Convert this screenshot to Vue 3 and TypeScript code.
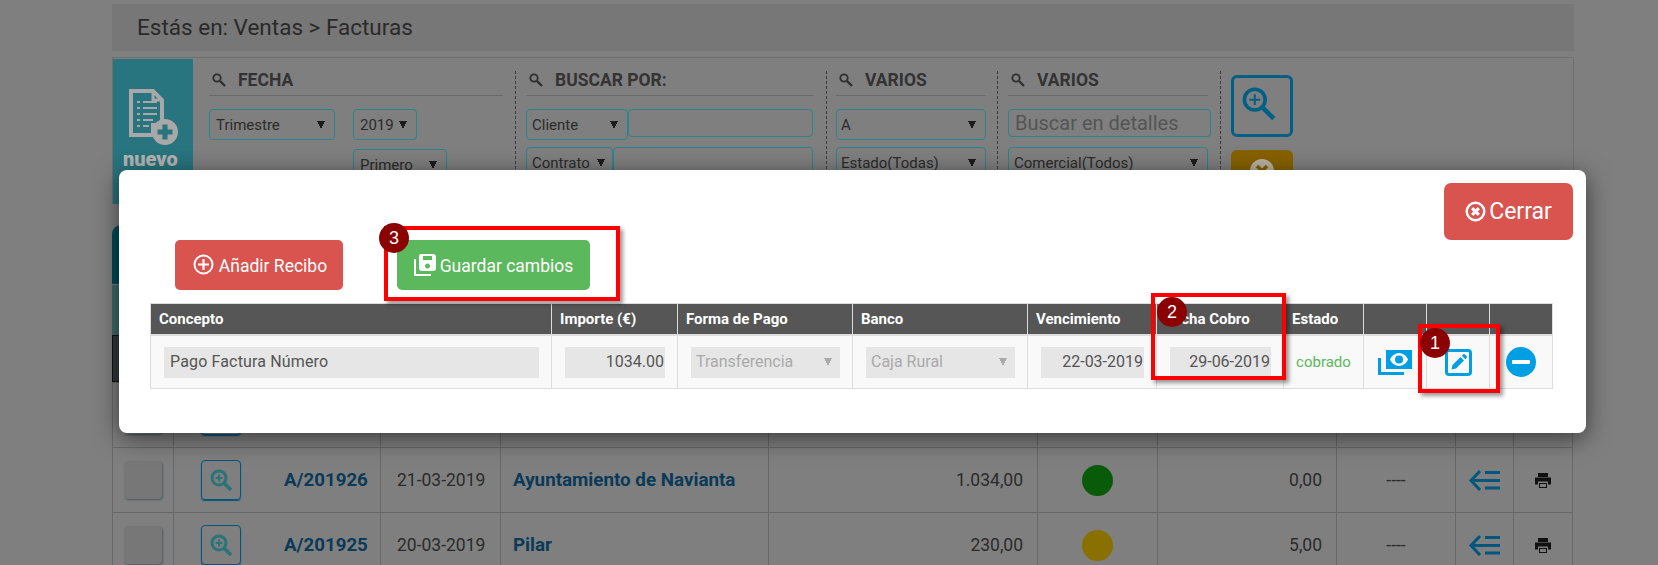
<script setup lang="ts">
interface Row {
  num: string
  date: string
  name: string
  amount: string
  dot: string
  paid: string
  other: string
}

const rows: Row[] = [
  { num: '', date: '', name: '', amount: '', dot: '', paid: '', other: '' },
  { num: 'A/201926', date: '21-03-2019', name: 'Ayuntamiento de Navianta', amount: '1.034,00', dot: 'green', paid: '0,00', other: '----' },
  { num: 'A/201925', date: '20-03-2019', name: 'Pilar', amount: '230,00', dot: 'yellow', paid: '5,00', other: '----' }
]
</script>

<template>
  <div class="page">
    <div class="crumb">Estás en: Ventas &gt; Facturas</div>

    <section class="panel">
      <div class="nuevo">
        <svg class="nuevo-icon" viewBox="0 0 50 57" width="50" height="57">
          <path d="M2 2H24L33 11V36H24V46H2Z" fill="none" stroke="#a8a8a8" stroke-width="4" />
          <path d="M24 2V11H33" fill="none" stroke="#a8a8a8" stroke-width="3" />
          <path d="M8 13h3M14 13h14M8 19h3M14 19h14M8 25h3M14 25h14M8 31h3M14 31h10M8 37h3M14 37h6" stroke="#a8a8a8" stroke-width="2" />
          <circle cx="36" cy="43" r="13" fill="#a8a8a8" />
          <path d="M36 35.500V50.500M28.500 43H43.500" stroke="#28747f" stroke-width="5" />
        </svg>
        <span class="nuevo-label">nuevo</span>
      </div>

      <div class="group g1">
        <h3 class="group-head">
          <svg class="lens" viewBox="0 0 14 14" width="14" height="14"><circle cx="5" cy="5" r="3.700" fill="none" stroke="#2f2f2f" stroke-width="1.800" /><path d="M8 8l5 5" stroke="#2f2f2f" stroke-width="2.400" /></svg>
          FECHA
        </h3>
        <div class="fecha-row">
          <select class="sel w126"><option>Trimestre</option></select>
          <div class="stack">
            <select class="sel w64"><option>2019</option></select>
            <select class="sel w94"><option>Primero</option></select>
          </div>
        </div>
      </div>

      <div class="group g2">
        <h3 class="group-head">
          <svg class="lens" viewBox="0 0 14 14" width="14" height="14"><circle cx="5" cy="5" r="3.700" fill="none" stroke="#2f2f2f" stroke-width="1.800" /><path d="M8 8l5 5" stroke="#2f2f2f" stroke-width="2.400" /></svg>
          BUSCAR POR:
        </h3>
        <div class="pair"><select class="sel w102"><option>Cliente</option></select><input class="txt grow" /></div>
        <div class="pair second"><select class="sel w87"><option>Contrato</option></select><input class="txt grow" /></div>
      </div>

      <div class="group g3">
        <h3 class="group-head">
          <svg class="lens" viewBox="0 0 14 14" width="14" height="14"><circle cx="5" cy="5" r="3.700" fill="none" stroke="#2f2f2f" stroke-width="1.800" /><path d="M8 8l5 5" stroke="#2f2f2f" stroke-width="2.400" /></svg>
          VARIOS
        </h3>
        <select class="sel full"><option>A</option></select>
        <select class="sel full second"><option>Estado(Todas)</option></select>
      </div>

      <div class="group g4">
        <h3 class="group-head">
          <svg class="lens" viewBox="0 0 14 14" width="14" height="14"><circle cx="5" cy="5" r="3.700" fill="none" stroke="#2f2f2f" stroke-width="1.800" /><path d="M8 8l5 5" stroke="#2f2f2f" stroke-width="2.400" /></svg>
          VARIOS
        </h3>
        <input class="txt detalles" placeholder="Buscar en detalles" />
        <select class="sel full third"><option>Comercial(Todos)</option></select>
      </div>

      <div class="actions">
        <button class="search-btn">
          <svg viewBox="0 0 62 62" width="56" height="56">
            <circle cx="23" cy="24" r="11.500" fill="none" stroke="#005f85" stroke-width="4" />
            <path d="M32 33L44 45" stroke="#005f85" stroke-width="5" />
            <path d="M23 18V30M17 24H29" stroke="#005f85" stroke-width="2.200" />
          </svg>
        </button>
        <button class="clear-btn">
          <svg viewBox="0 0 24 24" width="24" height="24">
            <circle cx="12" cy="12" r="12" fill="#b9b2a2" />
            <path d="M7 7L17 17M17 7L7 17" stroke="#876200" stroke-width="3.500" />
          </svg>
        </button>
      </div>
    </section>

    <div class="tab"></div>
    <div class="subbar"></div>
    <div class="list-head"></div>

    <table class="list">
      <colgroup>
        <col class="c61" /><col class="c207" /><col class="c120" /><col class="c268" /><col class="c269" />
        <col class="c120" /><col class="c179" /><col class="c119" /><col class="c58" /><col class="c59" />
      </colgroup>
      <tbody>
        <tr v-for="(row, i) in rows" :key="i">
          <td><span class="check"></span></td>
          <td>
            <div class="num-cell">
              <button class="zoom-btn">
                <svg viewBox="0 0 22 22" width="22" height="22">
                  <circle cx="9" cy="9" r="7" fill="none" stroke="#2a7378" stroke-width="3" />
                  <path d="M14 14L21 21" stroke="#2a7378" stroke-width="3.500" />
                  <path d="M9 5.500V12.500M5.500 9H12.500" stroke="#2a7378" stroke-width="1.800" />
                </svg>
              </button>
              <b class="num">{{ row.num }}</b>
            </div>
          </td>
          <td class="date">{{ row.date }}</td>
          <td class="name">{{ row.name }}</td>
          <td class="amount">{{ row.amount }}</td>
          <td class="center"><span v-if="row.dot" class="dot" :class="row.dot"></span></td>
          <td class="amount">{{ row.paid }}</td>
          <td class="center other">{{ row.other }}</td>
          <td class="center">
            <svg v-if="row.dot" class="cell-icon" viewBox="0 0 32 22" width="32" height="22">
              <path d="M11 2L2 11.500L11 21" fill="none" stroke="#00567c" stroke-width="3" />
              <path d="M3 11.500H31M16 3.500H31M16 19H31" stroke="#00567c" stroke-width="3" />
            </svg>
          </td>
          <td class="center">
            <svg class="cell-icon" viewBox="0 0 16 15" width="16" height="15">
              <path d="M3 0H13V4H3ZM0 4.500H16V11.500H13V8.500H3V11.500H0ZM4 10H12V15H4Z" fill="#111" />
              <path d="M5 11H11V14H5Z" fill="#7f7f7f" />
            </svg>
          </td>
        </tr>
      </tbody>
    </table>

    <div class="modal">
      <div class="modal-top">
        <button class="btn cerrar">
          <svg viewBox="0 0 22 22" width="21" height="21">
            <circle cx="11" cy="11" r="9.200" fill="none" stroke="#fff" stroke-width="2.600" />
            <path d="M7.500 7.500L14.500 14.500M14.500 7.500L7.500 14.500" stroke="#fff" stroke-width="3.400" />
          </svg>
          Cerrar
        </button>
      </div>
      <div class="modal-actions">
        <button class="btn add">
          <svg viewBox="0 0 21 21" width="21" height="21">
            <circle cx="10.500" cy="10.500" r="9" fill="none" stroke="#fff" stroke-width="2" />
            <path d="M10.500 5V16M5 10.500H16" stroke="#fff" stroke-width="2.200" />
          </svg>
          Añadir Recibo
        </button>
        <button class="btn save">
          <svg viewBox="0 0 22 22" width="22" height="22">
            <path fill-rule="evenodd" d="M7 0H19Q22 0 22 3V14Q22 17 19 17H8Q5 17 5 14V2Q5 0 7 0ZM9 2V6H18V2ZM13.500 9.500a2.500 2.500 0 1 0 .01 0Z" fill="#fff" />
            <path d="M1 5V21H17" fill="none" stroke="#fff" stroke-width="2" />
          </svg>
          Guardar cambios
        </button>
      </div>

      <table class="receipts">
        <colgroup>
          <col class="m401" /><col class="m126" /><col class="m175" /><col class="m175" /><col class="m129" />
          <col class="m127" /><col class="m80" /><col class="m63" /><col class="m63" /><col class="m63" />
        </colgroup>
        <thead>
          <tr>
            <th>Concepto</th><th>Importe (€)</th><th>Forma de Pago</th><th>Banco</th><th>Vencimiento</th>
            <th>Fecha Cobro</th><th>Estado</th><th></th><th></th><th></th>
          </tr>
        </thead>
        <tbody>
          <tr>
            <td><input class="field" value="Pago Factura Número" disabled /></td>
            <td><input class="field right" value="1034.00" disabled /></td>
            <td><select class="field pick" disabled><option>Transferencia</option></select></td>
            <td><select class="field pick" disabled><option>Caja Rural</option></select></td>
            <td><input class="field right" value="22-03-2019" disabled /></td>
            <td><input class="field right" value="29-06-2019" disabled /></td>
            <td class="cobrado">cobrado</td>
            <td class="tool">
              <svg viewBox="0 0 34 25" width="34" height="25">
                <path fill-rule="evenodd" d="M8 0H34V19H8ZM21 3C16 3 13 7 12 9.500C13 12 16 16 21 16C26 16 29 12 30 9.500C29 7 26 3 21 3Z" fill="#009fe3" />
                <circle cx="21" cy="9.500" r="4" fill="#009fe3" />
                <path d="M1.500 8V23.500H26" fill="none" stroke="#009fe3" stroke-width="3" />
              </svg>
            </td>
            <td class="tool">
              <svg viewBox="0 0 27 27" width="27" height="27">
                <path d="M15 1.500H4Q1.500 1.500 1.500 4V23Q1.500 25.500 4 25.500H23Q25.500 25.500 25.500 23V12" fill="none" stroke="#009fe3" stroke-width="3" />
                <path d="M15 1.500H23Q25.500 1.500 25.500 4V12" fill="none" stroke="#009fe3" stroke-width="3" />
                <path d="M6.500 20.500L7.500 16L15.500 8L19 11.500L11 19.500ZM16.800 6.700L18 5.500Q19 4.500 20 5.500L21.500 7Q22.500 8 21.500 9L20.300 10.200Z" fill="#009fe3" />
              </svg>
            </td>
            <td class="tool">
              <svg viewBox="0 0 30 30" width="30" height="30">
                <circle cx="15" cy="15" r="15" fill="#009fe3" />
                <rect x="6" y="13" width="18" height="4" rx="1" fill="#fff" />
              </svg>
            </td>
          </tr>
        </tbody>
      </table>
    </div>

    <div class="mark m3"></div>
    <div class="mark m2"></div>
    <div class="mark m1"></div>
    <span class="badge b3">3</span>
    <span class="badge b2">2</span>
    <span class="badge b1">1</span>
  </div>
</template>

<style>
html,
body {
  margin: 0;
  overflow: hidden;
  background: #7f7f7f;
}
</style>

<style scoped>
.page {
  position: relative;
  box-sizing: border-box;
  width: 1658px;
  height: 565px;
  padding: 4px 84px 0 112px;
  overflow: hidden;
  background: #7f7f7f;
  font-family: Roboto, "Liberation Sans", sans-serif;
  color: #2b2b2b;
}
.crumb {
  box-sizing: border-box;
  height: 47px;
  padding-left: 25px;
  line-height: 46px;
  font-size: 22.500px;
  background: #777;
  color: #2a2a2a;
}
.panel {
  display: flex;
  box-sizing: border-box;
  height: 147px;
  margin-top: 6px;
  padding: 1px 0 0;
  border: 1px solid #6f6f6f;
  border-bottom: 0;
}
.nuevo {
  display: flex;
  flex-direction: column;
  align-items: flex-start;
  width: 80px;
  flex: none;
  padding: 30px 0 0 16px;
  box-sizing: border-box;
  background: #28747f;
}
.nuevo-label {
  margin: 2px 0 0 -6px;
  font-size: 20px;
  font-weight: 900;
  line-height: 22px;
  color: #b4b4b4;
}
.group {
  box-sizing: border-box;
  flex: none;
  height: 133px;
  margin-top: 12px;
  border-right: 1px dashed #3c3c3c;
}
.g1 { width: 323px; padding-left: 16px; padding-right: 12px; }
.g2 { width: 311px; padding-left: 10px; padding-right: 13px; }
.g3 { width: 171px; padding-left: 9px; padding-right: 11px; }
.g4 { width: 223px; padding-left: 10px; padding-right: 12px; }
.group-head {
  display: flex;
  align-items: center;
  gap: 12px;
  box-sizing: border-box;
  height: 25px;
  margin: 0 0 13px;
  padding: 0 0 6px 3px;
  border-bottom: 1px solid #696969;
  font-size: 17.500px;
  font-weight: 700;
  line-height: 20px;
  color: #333;
}
.lens { flex: none; }
.sel,
.pick {
  appearance: none;
  background-repeat: no-repeat;
  background-size: 4px 8px;
}
.sel {
  box-sizing: border-box;
  height: 31px;
  padding: 0 16px 0 6px;
  border: 1px solid #2a848c;
  border-radius: 4px;
  background-color: transparent;
  background-image: linear-gradient(to top right, transparent 50%, #1c1c1c 50%), linear-gradient(to top left, transparent 50%, #1c1c1c 50%);
  background-position: right 13px center, right 9px center;
  color: #2b2b2b;
  font: 15px Roboto, sans-serif;
}
.g2 .sel, .g4 .sel { padding-left: 5px; }
.g3 .sel { padding-left: 4px; }
.g2 .w87 { background-position: right 11px center, right 7px center; }
.txt {
  box-sizing: border-box;
  height: 28px;
  padding: 0 6px;
  border: 1px solid #2a848c;
  border-radius: 4px;
  background: transparent;
  font: 20px Roboto, sans-serif;
}
.txt::placeholder { color: #555; opacity: 1; }
.w126 { width: 126px; }
.w64 { width: 64px; }
.w94 { width: 94px; }
.w102 { width: 102px; flex: none; }
.w87 { width: 87px; flex: none; }
.full { display: block; width: 100%; }
.second { margin-top: 7px; }
.third { margin-top: 10px; }
.fecha-row { display: flex; gap: 18px; align-items: flex-start; }
.stack { display: flex; flex-direction: column; align-items: flex-start; gap: 9px; }
.pair { display: flex; align-items: flex-start; }
.grow { flex: 1; min-width: 0; }
.detalles { display: block; width: 203px; }
.actions {
  display: flex;
  flex-direction: column;
  gap: 13px;
  margin: 16px 0 0 10px;
}
.search-btn,
.clear-btn {
  display: flex;
  align-items: center;
  justify-content: center;
  box-sizing: border-box;
  width: 62px;
  height: 62px;
  padding: 0;
  border-radius: 6px;
}
.search-btn { border: 3px solid #005f85; background: transparent; }
.clear-btn { align-items: flex-start; padding-top: 9px; border: 0; background: #876200; }
.tab {
  height: 59px;
  margin-top: 21px;
  border-radius: 9px 0 0 0;
  background: #004a55;
}
.subbar {
  height: 50px;
  margin-top: 1px;
  background: #3f6a6a;
}
.list-head {
  box-sizing: border-box;
  height: 47px;
  border: 1px solid #111;
  background: #2f3a3f;
}
.list {
  table-layout: fixed;
  width: 1460px;
  border-collapse: collapse;
  font-size: 17.500px;
  color: #2b2b2b;
}
.list td {
  height: 65px;
  padding: 0;
  border: 1px solid #686868;
  box-sizing: border-box;
}
.c61 { width: 61px; }
.c207 { width: 207px; }
.c120 { width: 120px; }
.c268 { width: 268px; }
.c269 { width: 269px; }
.c179 { width: 179px; }
.c119 { width: 119px; }
.c58 { width: 58px; }
.c59 { width: 59px; }
.check {
  display: block;
  box-sizing: border-box;
  width: 38px;
  height: 38px;
  margin-left: 11px;
  border-radius: 4px;
  background: #777;
  box-shadow: 1px 1px 2px #4a5d66;
}
.num-cell { display: flex; align-items: center; padding-left: 27px; }
.zoom-btn {
  display: flex;
  align-items: center;
  justify-content: center;
  flex: none;
  box-sizing: border-box;
  width: 40px;
  height: 40px;
  padding: 0;
  border: 1px solid #00567c;
  border-radius: 4px;
  background: transparent;
  box-shadow: 0 1px 1px #00567c;
}
.num { margin-left: 43px; font-size: 18.700px; font-weight: 700; color: #0a3a58; }
.list td.date { padding-left: 16px; }
.list td.name { padding-left: 12px; font-size: 18.800px; font-weight: 700; color: #0a3a58; }
.list td.amount { padding-right: 14px; text-align: right; }
.list td.center { text-align: center; }
.cell-icon { display: block; margin: 0 auto; }
.dot {
  display: block;
  width: 31px;
  height: 31px;
  margin: 0 auto;
  border-radius: 50%;
}
.green { background: #095a09; }
.yellow { background: #8a7000; }

.modal {
  position: absolute;
  left: 119px;
  top: 170px;
  box-sizing: border-box;
  width: 1467px;
  height: 263px;
  padding: 13px 13px 0 31px;
  border-radius: 8px;
  background: #fff;
  box-shadow: 0 5px 25px rgba(0, 0, 0, 0.55);
}
.modal-top { display: flex; justify-content: flex-end; }
.btn {
  display: inline-flex;
  align-items: center;
  justify-content: center;
  box-sizing: border-box;
  border: 0;
  color: #fff;
  font-family: Roboto, sans-serif;
  border-radius: 5px;
}
.cerrar {
  gap: 3px;
  width: 129px;
  height: 57px;
  border-radius: 7px;
  background: #d9534f;
  font-size: 23px;
}
.modal-actions {
  display: flex;
  gap: 54px;
  padding-left: 25px;
}
.add,
.save {
  height: 50px;
  padding-top: 3px;
  font-size: 17.500px;
}
.add svg,
.save svg { margin-bottom: 3px; }
.add {
  gap: 5px;
  width: 168px;
  padding-left: 8px;
  background: #d9534f;
}
.save {
  gap: 4px;
  width: 193px;
  background: #5cb85c;
}
.receipts {
  table-layout: fixed;
  width: 1403px;
  margin-top: 13px;
  border-collapse: collapse;
  border: 1px solid #ddd;
}
.m401 { width: 401px; }
.m126 { width: 126px; }
.m175 { width: 175px; }
.m129 { width: 129px; }
.m127 { width: 127px; }
.m80 { width: 80px; }
.m63 { width: 63px; }
.receipts th {
  height: 29px;
  padding: 0 0 1px 8px;
  border: 1px solid #ddd;
  border-bottom-width: 2px;
  background: #565656;
  color: #fff;
  font-size: 15px;
  font-weight: 700;
  text-align: left;
}
.receipts td {
  height: 52px;
  padding: 0 12px 0 13px;
  border: 1px solid #ddd;
  background: #f9f9f9;
}
.field {
  display: block;
  box-sizing: border-box;
  width: 100%;
  height: 31px;
  padding: 0 1px 2px 6px;
  border: 0;
  background-color: #e6e6e6;
  color: #555;
  font: 16px Roboto, sans-serif;
  letter-spacing: 0.150px;
  opacity: 1;
}
.right { text-align: right; letter-spacing: 0; }
.pick {
  padding-left: 5px;
  color: #aaa;
  letter-spacing: 0;
  background-image: linear-gradient(to top right, transparent 50%, #aaa 50%), linear-gradient(to top left, transparent 50%, #aaa 50%);
  background-position: right 12px center, right 8px center;
}
.receipts td.cobrado { padding: 0; text-align: center; color: #5cb85c; font-size: 15px; }
.receipts td.tool { padding: 0; text-align: center; }
.tool svg { display: block; margin: 0 auto; }

.mark {
  position: absolute;
  box-sizing: border-box;
  border: 4px solid #f00;
  box-shadow: 3px 3px 4px rgba(0, 0, 0, 0.4);
}
.m1 { left: 1418px; top: 324px; width: 82px; height: 69px; }
.m2 { left: 1151px; top: 293px; width: 135px; height: 87px; }
.m3 { left: 384px; top: 226px; width: 236px; height: 75px; }
.badge {
  position: absolute;
  width: 30px;
  height: 30px;
  border-radius: 50%;
  background: #8b0000;
  color: #fff;
  font: 18px/30px "Liberation Sans", sans-serif;
  text-align: center;
}
.b1 { left: 1420px; top: 328px; }
.b2 { left: 1157px; top: 297px; }
.b3 { left: 379px; top: 223px; }
</style>
